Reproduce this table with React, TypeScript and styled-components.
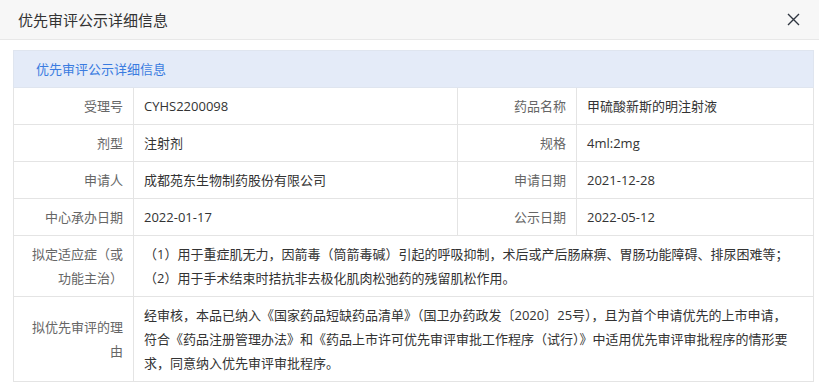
import React from "react";
import styled, { createGlobalStyle } from "styled-components";

const GlobalStyle = createGlobalStyle`
  html, body {
    margin: 0;
    padding: 0;
    background: #ffffff;
  }
  body {
    font-family: "Open Sans", "Noto Sans CJK SC", sans-serif;
    color: #333333;
  }
`;

const Dialog = styled.div`
  width: 819px;
  height: 385px;
  background: #ffffff;
  overflow: hidden;
`;

const DialogHeader = styled.div`
  display: flex;
  align-items: center;
  justify-content: space-between;
  height: 40px;
  padding: 0 16px 0 18px;
  box-sizing: border-box;
  background: #f7f7f7;
  border-bottom: 1px solid #e8e8e8;
`;

const DialogTitle = styled.h1`
  margin: 0;
  font-size: 15px;
  font-weight: 400;
  color: #333333;
`;

const CloseButton = styled.button`
  display: flex;
  align-items: center;
  justify-content: center;
  width: 20px;
  height: 20px;
  padding: 0;
  border: none;
  background: transparent;
  cursor: pointer;
`;

const DialogBody = styled.div`
  padding: 10px 7px 0 13px;
`;

const InfoTable = styled.table`
  width: 800px;
  border-collapse: collapse;
  table-layout: fixed;
  font-size: 13px;
  line-height: 24px;
`;

const SectionHead = styled.th`
  height: 36px;
  padding: 0 22px;
  text-align: left;
  font-weight: 400;
  font-size: 13px;
  color: #3a7be0;
  background: #e4ebf8;
  border: 1px solid #dfe5ef;
`;

const LabelCell = styled.td`
  padding: 6px 10px;
  text-align: right;
  vertical-align: middle;
  color: #666666;
  border: 1px solid #e4e4e4;
`;

const ValueCell = styled.td<{ $wide?: boolean }>`
  padding: 6px ${({ $wide }) => ($wide ? "22px" : "10px")} 6px 10px;
  text-align: left;
  vertical-align: middle;
  color: #333333;
  border: 1px solid #e4e4e4;
`;

const CloseIcon = () => (
  <svg width="13" height="13" viewBox="0 0 13 13">
    <path d="M1 1 L12 12 M12 1 L1 12" stroke="#2f3640" strokeWidth="1.4" />
  </svg>
);

const pairs: [string, string, string, string][] = [
  ["受理号", "CYHS2200098", "药品名称", "甲硫酸新斯的明注射液"],
  ["剂型", "注射剂", "规格", "4ml:2mg"],
  ["申请人", "成都苑东生物制药股份有限公司", "申请日期", "2021-12-28"],
  ["中心承办日期", "2022-01-17", "公示日期", "2022-05-12"],
];

export default function App() {
  return (
    <>
      <GlobalStyle />
      <Dialog>
        <DialogHeader>
          <DialogTitle>优先审评公示详细信息</DialogTitle>
          <CloseButton aria-label="关闭">
            <CloseIcon />
          </CloseButton>
        </DialogHeader>
        <DialogBody>
          <InfoTable>
            <colgroup>
              <col style={{ width: 120 }} />
              <col style={{ width: 324 }} />
              <col style={{ width: 119 }} />
              <col style={{ width: 237 }} />
            </colgroup>
            <thead>
              <tr>
                <SectionHead colSpan={4}>优先审评公示详细信息</SectionHead>
              </tr>
            </thead>
            <tbody>
              {pairs.map(([l1, v1, l2, v2]) => (
                <tr key={l1}>
                  <LabelCell>{l1}</LabelCell>
                  <ValueCell>{v1}</ValueCell>
                  <LabelCell>{l2}</LabelCell>
                  <ValueCell>{v2}</ValueCell>
                </tr>
              ))}
              <tr>
                <LabelCell>拟定适应症（或功能主治）</LabelCell>
                <ValueCell colSpan={3} $wide>
                  （1）用于重症肌无力，因箭毒（筒箭毒碱）引起的呼吸抑制，术后或产后肠麻痹、胃肠功能障碍、排尿困难等；
                  <br />
                  （2）用于手术结束时拮抗非去极化肌肉松弛药的残留肌松作用。
                </ValueCell>
              </tr>
              <tr>
                <LabelCell>拟优先审评的理由</LabelCell>
                <ValueCell colSpan={3} $wide>
                  经审核，本品已纳入《国家药品短缺药品清单》（国卫办药政发〔2020〕25号），且为首个申请优先的上市申请，符合《药品注册管理办法》和《药品上市许可优先审评审批工作程序（试行）》中适用优先审评审批程序的情形要求，同意纳入优先审评审批程序。
                </ValueCell>
              </tr>
            </tbody>
          </InfoTable>
        </DialogBody>
      </Dialog>
    </>
  );
}
